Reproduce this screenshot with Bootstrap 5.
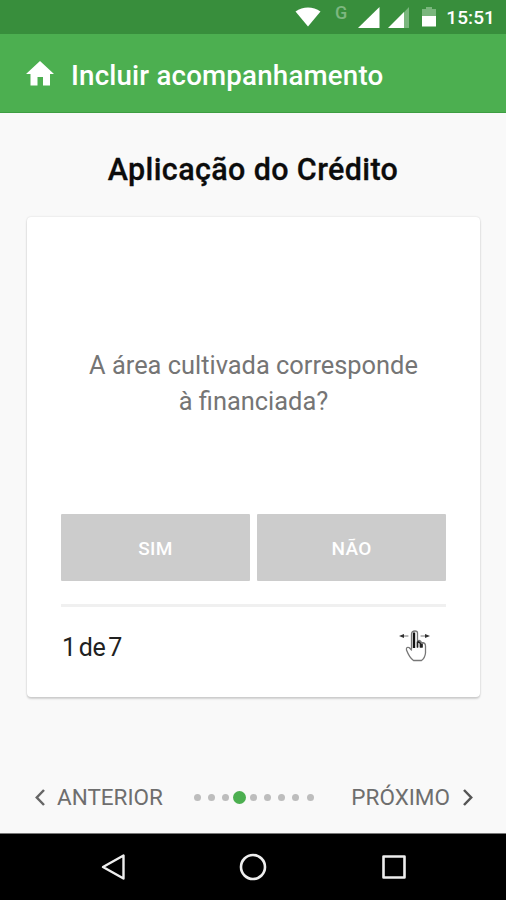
<!DOCTYPE html>
<html lang="pt-BR">
<head>
<meta charset="utf-8">
<meta name="viewport" content="width=device-width, initial-scale=1">
<title>Incluir acompanhamento</title>
<link href="https://cdn.jsdelivr.net/npm/bootstrap@5.3.0/dist/css/bootstrap.min.css" rel="stylesheet">
<style>
body{font-family:Roboto,"Liberation Sans",sans-serif;background:#f9f9f9;height:900px;overflow:hidden}
svg{display:block;flex:none}
.status{height:34px;background:#388e3c;padding-right:11px}
.clock{font-size:19px;font-weight:500;line-height:34px;padding-top:2px;margin-left:10px;letter-spacing:.1px}
.carrier{font-size:18px;line-height:26px;color:#7db780;font-weight:500;margin:0 11px 8px 14px}
.battery{margin-left:12px}
.appbar{height:79px;background:#4caf50;border-bottom:1px solid #3d9e42;padding:0 0 0 26px}
.appbar h1{font-size:27.7px;font-weight:500;margin:5px 0 0 17px;line-height:36px;letter-spacing:.19px}
.section-title{font-size:30.5px;font-weight:500;color:#0c0c0c;line-height:40px;margin-top:37px;height:40px;letter-spacing:.37px;-webkit-text-stroke:.3px #0c0c0c}
.question-card{margin:27px 26px 0 27px;height:480px;border:0;border-radius:4px;padding:0 34px;box-shadow:0 2px 2px rgba(0,0,0,.15),0 0 2px rgba(0,0,0,.16)}
.question{font-size:25.4px;line-height:36px;color:#757575;height:297px;padding-top:34px;margin:0}
.answers{gap:7px}
.answers .btn{height:67px;background:#ccc;color:#fff;border:0;border-radius:1px;font-size:19px;font-weight:500;letter-spacing:.3px;padding-top:9px}
.rule{height:3px;background:#f0f0f0;margin-top:23px}
.counter{font-size:25px;color:#212121;line-height:36px;word-spacing:-3px;letter-spacing:-.3px;padding:1px 0 0 1px}
.card-foot{height:80px}
.hand{margin-right:15px}
.pager{height:72px;margin-top:64px;padding:0 33px 0 35px}
.pager .btn{font-size:22.5px;color:#6e6e6e;line-height:30px}
.prev-icon{margin-right:12px}
.next-icon{margin-left:13px}
.dots i{width:7px;height:7px;border-radius:50%;background:#bdbdbd}
.dots i.on{width:13px;height:13px;background:#4caf50;margin:0 -3px}
.dots{gap:7.1px;margin-right:7px}
.sysbar{height:67px;background:#000;border-top:1px solid #777}
.home-key{margin:0 114px}
</style>
</head>
<body class="d-flex flex-column">
<div class="status d-flex align-items-center justify-content-end text-white">
  <svg width="26" height="20" viewBox="0 0 26 20"><path fill="#fff" d="M.5 4.500C8-1 18-1 25.500 4.500L13 19.500Z"/></svg>
  <span class="carrier">G</span>
  <svg width="22" height="21" viewBox="0 0 22 21"><path fill="#fff" d="M21.500 0V21H0Z"/></svg>
  <svg class="ms-2" width="22" height="21" viewBox="0 0 22 21"><path fill="#7ab67d" d="M21 0V21H1Z"/><path fill="#fff" d="M16 5V21H0Z"/></svg>
  <svg class="battery" width="14" height="20" viewBox="0 0 14 20"><path fill="#7ab67d" d="M4 2V0h6v2h4v8H0V2z"/><path fill="#fff" d="M0 9h14v10.500H0z"/></svg>
  <span class="clock">15:51</span>
</div>
<header class="appbar d-flex align-items-center text-white">
  <svg width="28" height="25" viewBox="0 0 28 25"><path fill="#fff" d="M14 0 28 13H24V24.500H17V16H11.500V24.500H4.500V13H0Z"/></svg>
  <h1>Incluir acompanhamento</h1>
</header>
<h2 class="section-title text-center mb-0">Aplicação do Crédito</h2>
<main class="card question-card">
  <p class="question d-flex align-items-center justify-content-center text-center">A área cultivada corresponde<br>à financiada?</p>
  <div class="answers d-flex">
    <button class="btn flex-fill w-50" type="button">SIM</button>
    <button class="btn flex-fill w-50" type="button">NÃO</button>
  </div>
  <div class="rule"></div>
  <div class="card-foot d-flex align-items-center justify-content-between">
    <span class="counter">1 de 7</span>
    <svg class="hand" width="32" height="34" viewBox="0 1 32 34" fill="none" stroke-linecap="round" stroke-linejoin="round">
      <path stroke="#777" stroke-width="1" d="M4 7H9M22 7H27"/>
      <path fill="#333" d="M0 7 5 5V9ZM31 7 26 5V9Z"/>
      <path fill="#fff" stroke="#777" stroke-width="1.300" d="M12.500 20V5Q12.500 2 16 2Q18.500 2 18.500 4V12Q21 10.500 22.500 13.500Q26.500 13.500 26.500 17V24Q26 29 22.500 31.500H14.500C11 29 9 25 7.500 21Q7 17.500 10 18.500L12.500 21"/>
      <path stroke="#111" stroke-width="2.400" stroke-linecap="butt" d="M15 3.500V19"/>
      <path stroke="#222" stroke-width="1.700" d="M18.500 18V13Q21 12.500 21.500 15V18M23 18V15"/>
    </svg>
  </div>
</main>
<nav class="pager d-flex align-items-center justify-content-between">
  <button class="btn p-0 border-0 d-flex align-items-center" type="button"><svg class="prev-icon" width="10" height="17" viewBox="0 0 10 17" fill="none" stroke="#666" stroke-width="2.500"><path d="M9 1 1.800 8.500 9 16"/></svg>ANTERIOR</button>
  <div class="dots d-flex align-items-center"><i></i><i></i><i></i><i class="on"></i><i></i><i></i><i></i><i></i><i></i></div>
  <button class="btn p-0 border-0 d-flex align-items-center" type="button">PRÓXIMO<svg class="next-icon" width="10" height="17" viewBox="0 0 10 17" fill="none" stroke="#555" stroke-width="2.500"><path d="M1 1 8.200 8.500 1 16"/></svg></button>
</nav>
<footer class="sysbar d-flex justify-content-center align-items-center mt-auto">
  <svg width="26" height="28" viewBox="0 0 26 28" fill="none" stroke="#eee" stroke-width="2.400" stroke-linejoin="round"><path d="M24.500 2.500V25.500L4 14Z"/></svg>
  <svg class="home-key" width="28" height="28" viewBox="0 0 28 28" fill="none" stroke="#eee" stroke-width="2.600"><circle cx="14" cy="14" r="12"/></svg>
  <svg width="26" height="26" viewBox="0 0 26 26" fill="none" stroke="#eee" stroke-width="2.600" stroke-linejoin="round"><path d="M2.500 2.500H23.500V23.500H2.500Z"/></svg>
</footer>
<script src="https://cdn.jsdelivr.net/npm/bootstrap@5.3.0/dist/js/bootstrap.bundle.min.js"></script>
</body>
</html>
